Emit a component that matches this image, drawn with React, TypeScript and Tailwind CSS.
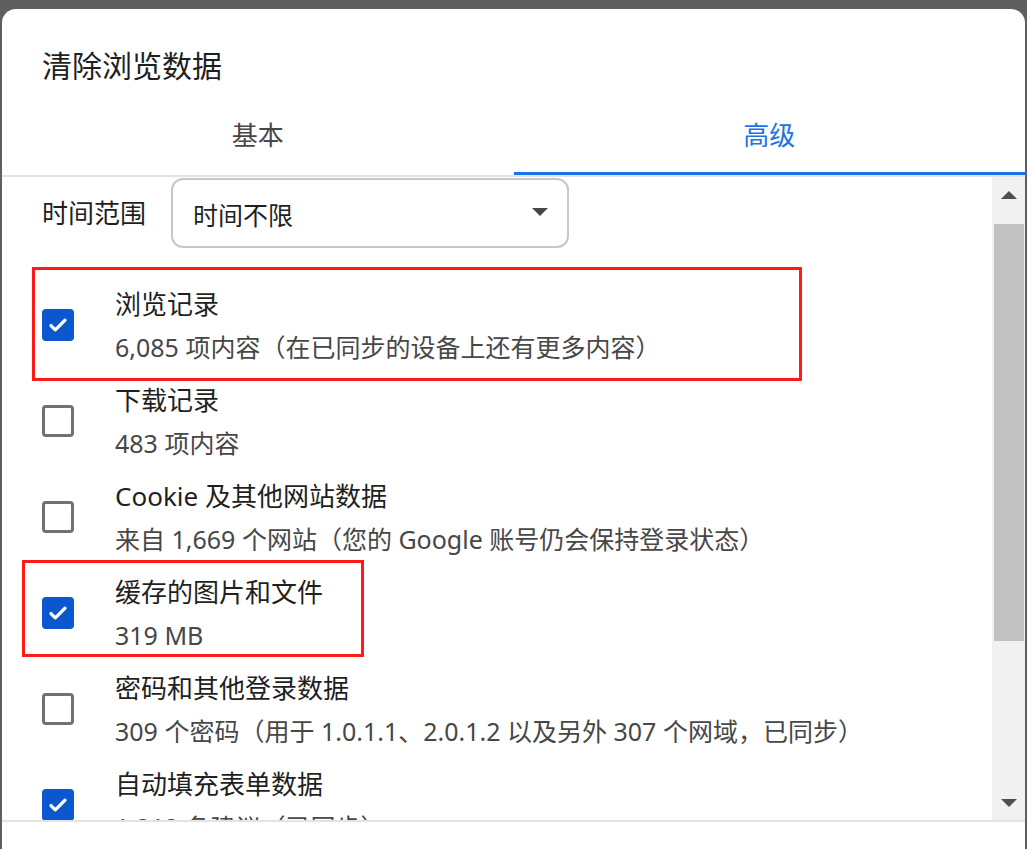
import React from "react";

const FONT = { fontFamily: '"Noto Sans", "Noto Sans CJK SC", sans-serif' };

type Item = { label: string; sub: string; checked: boolean };

const items: Item[] = [
  { label: "浏览记录", sub: "6,085 项内容（在已同步的设备上还有更多内容）", checked: true },
  { label: "下载记录", sub: "483 项内容", checked: false },
  { label: "Cookie 及其他网站数据", sub: "来自 1,669 个网站（您的 Google 账号仍会保持登录状态）", checked: false },
  { label: "缓存的图片和文件", sub: "319 MB", checked: true },
  { label: "密码和其他登录数据", sub: "309 个密码（用于 1.0.1.1、2.0.1.2 以及另外 307 个网域，已同步）", checked: false },
  { label: "自动填充表单数据", sub: "1,212 条建议（已同步）", checked: true },
];

function Checkbox({ checked }: { checked: boolean }) {
  if (checked) {
    return (
      <div className="w-[32px] h-[32px] shrink-0 rounded-[4px] bg-[#0b57d0] flex items-center justify-center">
        <svg width="26" height="26" viewBox="0 0 24 24">
          <path d="M5.5 12.5l4 4L18.5 7.5" fill="none" stroke="#ffffff" strokeWidth="3" strokeLinecap="round" strokeLinejoin="round" />
        </svg>
      </div>
    );
  }
  return <div className="w-[32px] h-[32px] shrink-0 rounded-[4px] border-[3px] border-[#717171] bg-white" />;
}

export default function App() {
  return (
    <div className="relative w-[1027px] h-[849px] bg-[#5f5f5f] overflow-hidden pt-[9px] pl-[2px]" style={FONT}>
      <div className="w-[1023px] h-[840px] bg-white rounded-t-[14px] flex flex-col">
        <div className="pt-[37px] px-[40px]">
          <div className="h-[40px] leading-[40px] text-[30px] text-[#1f1f1f]">清除浏览数据</div>
        </div>
        <div className="mt-[12px] h-[79px] flex border-b-2 border-[#e3e3e3]">
          <div className="flex-1 flex flex-col">
            <div className="flex-1 flex items-center justify-center text-[26px] text-[#474747]">基本</div>
            <div className="h-[3px]" />
          </div>
          <div className="flex-1 flex flex-col">
            <div className="flex-1 flex items-center justify-center text-[26px] text-[#1a73e8]">高级</div>
            <div className="h-[3px] bg-[#1a73e8]" />
          </div>
        </div>
        <div className="flex-1 flex overflow-hidden">
          <div className="flex-1 pl-[40px] overflow-hidden">
            <div className="mt-[1px] h-[70px] flex items-center">
              <div className="w-[129px] text-[26px] text-[#1f1f1f] leading-[40px]">时间范围</div>
              <div className="w-[398px] h-[70px] border-2 border-[#c7c7c7] rounded-[12px] pl-[20px] pr-[19px] flex items-center justify-between">
                <span className="text-[25px] text-[#1f1f1f] leading-[40px] mt-[4px]">时间不限</span>
                <svg width="16" height="8" viewBox="0 0 16 8" className="-mt-[2px]">
                  <path d="M0 0h16L8 8z" fill="#474747" />
                </svg>
              </div>
            </div>
            <div className="mt-[29px] flex flex-col">
              {items.map((it) => (
                <div key={it.label} className="h-[96px] shrink-0 flex items-center">
                  <Checkbox checked={it.checked} />
                  <div className="ml-[41px] flex flex-col whitespace-nowrap">
                    <div className="text-[26px] leading-[44px] text-[#1f1f1f]">{it.label}</div>
                    <div className="text-[25px] leading-[42px] text-[#474747]">{it.sub}</div>
                  </div>
                </div>
              ))}
            </div>
          </div>
          <div className="w-[33px] shrink-0 bg-[#f1f1f1] flex flex-col">
            <div className="h-[47px] flex items-start pt-[14px] pl-[9px]">
              <svg width="16" height="8" viewBox="0 0 16 8">
                <path d="M0 8h16L8 0z" fill="#505050" />
              </svg>
            </div>
            <div className="ml-[2px] w-[30px] h-[417px] bg-[#c1c1c1]" />
            <div className="flex-1 flex items-end pb-[13px] pl-[9px]">
              <svg width="16" height="8" viewBox="0 0 16 8">
                <path d="M0 0h16L8 8z" fill="#505050" />
              </svg>
            </div>
          </div>
        </div>
        <div className="h-[29px] border-t-2 border-[#e3e3e3]" />
      </div>
      <div className="absolute left-[32px] top-[267px] w-[770px] h-[114px] border-[3px] border-[#ff1a1a]" />
      <div className="absolute left-[22px] top-[560px] w-[342px] h-[97px] border-[3px] border-[#ff1a1a]" />
    </div>
  );
}
